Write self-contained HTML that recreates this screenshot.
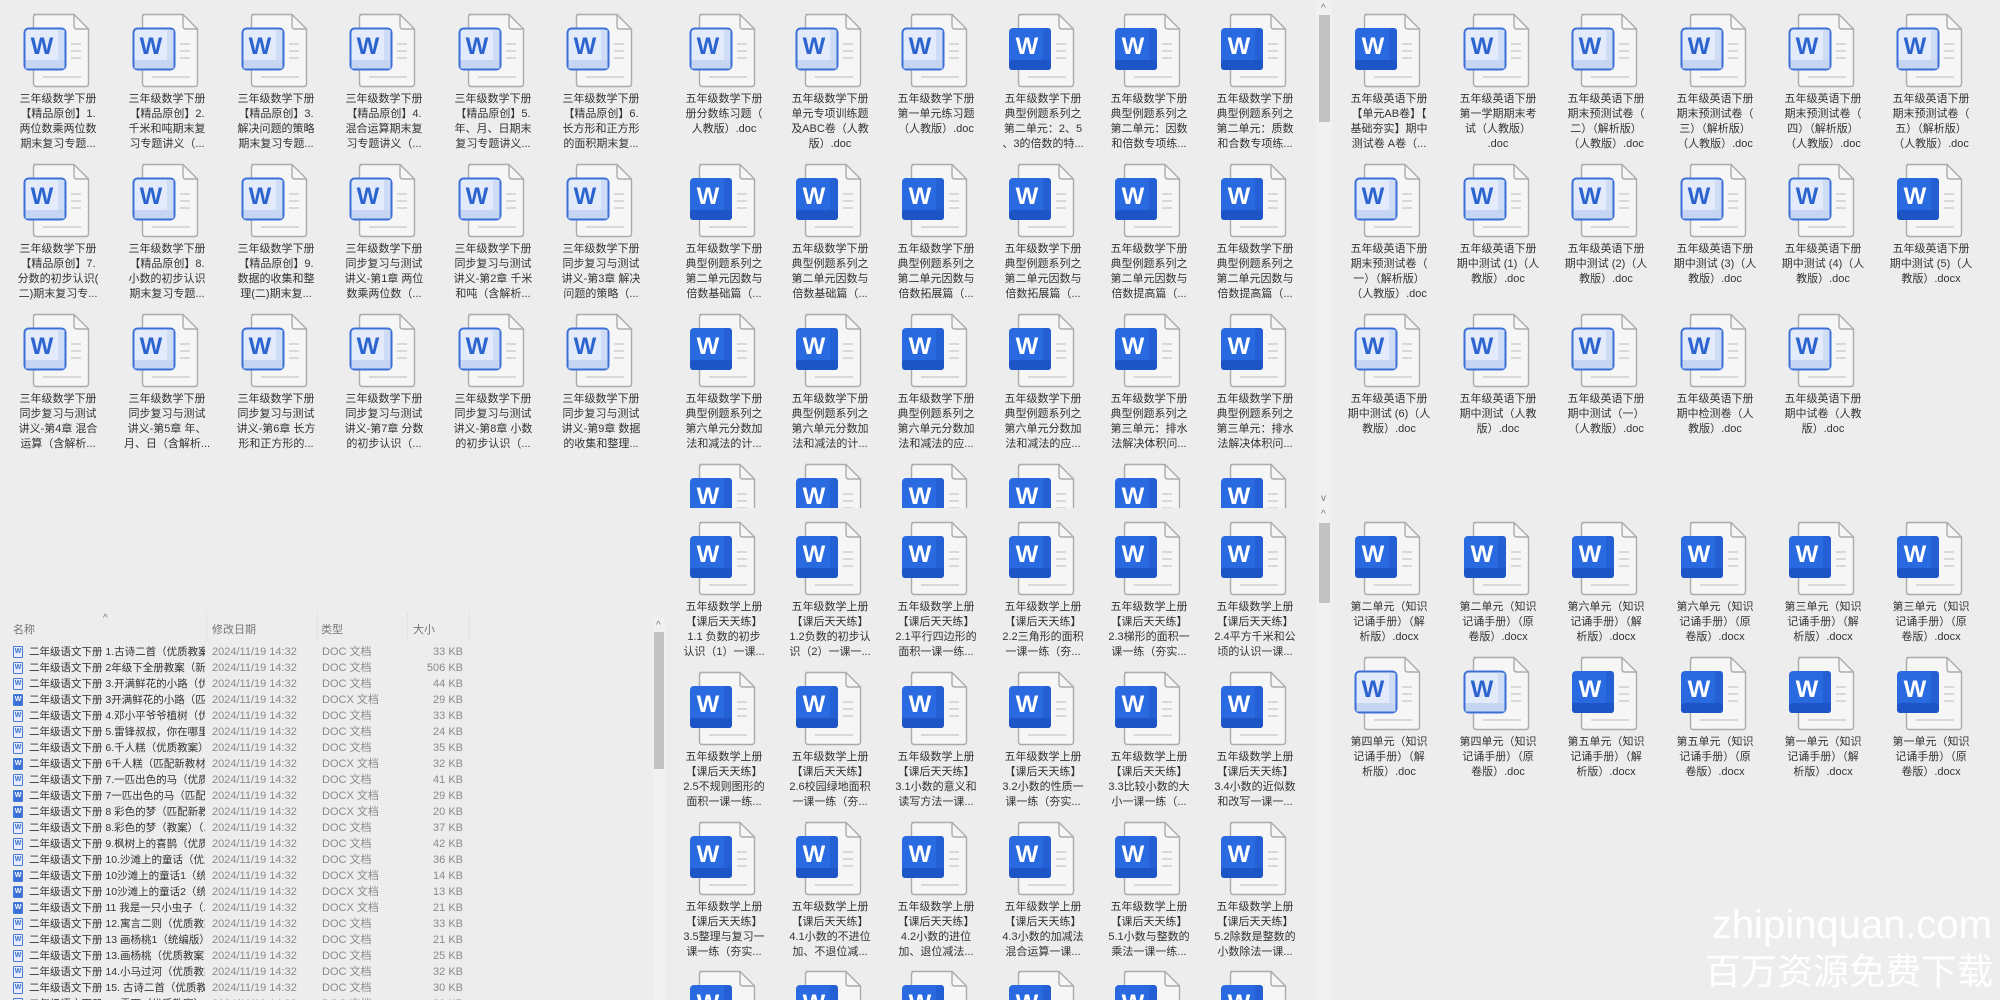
<!DOCTYPE html>
<html><head><meta charset="utf-8">
<style>
*{margin:0;padding:0;box-sizing:border-box}
html,body{width:2000px;height:1000px;overflow:hidden;background:#ededed}
body{position:relative;font-family:"Liberation Sans","Noto Sans CJK SC",sans-serif}
.p{position:absolute;overflow:hidden}
.it{position:absolute;width:108px;height:140px}
.it svg{position:absolute;left:19px;top:0;width:70px;height:75px}
.t{position:absolute;top:79px;left:-8px;width:124px;text-align:center;font-size:11px;line-height:15px;color:#333;white-space:nowrap}
.sb{position:absolute;background:#f1f1f1}
.th{position:absolute;background:#c2c2c2}
.ar{position:absolute;font-size:10px;color:#777;line-height:10px}
.hd{position:absolute;top:21px;font-size:11px;color:#777}
.sep{position:absolute;top:12px;width:1px;height:30px;background:#e2e2e2}
.row{position:absolute;left:0;width:650px;height:16px;font-size:11px;line-height:16px;white-space:nowrap}
.row i{position:absolute;left:13px;top:2px;width:10px;height:12px;border:1px solid #4a7bd6;background:#e6eefb;border-radius:1px;font-style:normal;font-size:7px;line-height:10px;text-align:center;color:#3a70d8;font-weight:bold}
.row i.x{background:#3a70d8;color:#fff}
.row .n{position:absolute;left:29px;width:176px;overflow:hidden;color:#333;font-size:10.5px}
.row .d{position:absolute;left:212px;color:#8a8a8a}
.row .y{position:absolute;left:322px;color:#8a8a8a}
.row .s{position:absolute;right:187px;color:#8a8a8a}
.wm{position:absolute;color:#fff;white-space:nowrap}
</style></head><body>
<svg width="0" height="0" style="position:absolute">
<defs>
<symbol id="pg" viewBox="0 0 70 75">
<path d="M10.5 1.5H51L65.5 16V70.5Q65.5 73.5 62.5 73.5H13.5Q10.5 73.5 10.5 70.5V4.5Q10.5 1.5 13.5 1.5Z" fill="#f6f6f6" stroke="#ababab" stroke-width="1.4"/>
<path d="M51 1.5V13Q51 16 54 16H65.5" fill="none" stroke="#ababab" stroke-width="1.4"/>
<path d="M48 31H58M48 38H58M48 45H58M20 64H58" stroke="#d8d8d8" stroke-width="2"/>
</symbol>
<symbol id="L" viewBox="0 0 70 75">
<use href="#pg"/>
<rect x="1.5" y="15.5" width="41" height="41" rx="4" fill="#e3ebfa" stroke="#3a70d8" stroke-width="2"/>
<rect x="35" y="17" width="6.5" height="38" fill="#cfdcf5"/>
<rect x="2.5" y="47" width="39" height="8.5" fill="#c6d5f2"/>
<text x="19" y="41" font-family="Liberation Sans" font-weight="bold" font-size="24" fill="#2c64cf" text-anchor="middle">W</text>
</symbol>
<symbol id="S" viewBox="0 0 70 75">
<use href="#pg"/>
<rect x="1" y="15" width="42" height="42" rx="4" fill="#2a6ae0"/>
<rect x="35" y="15" width="8" height="42" rx="3" fill="#2460d3"/>
<rect x="1" y="47" width="42" height="10" rx="3" fill="#1d55c6"/>
<text x="19" y="41" font-family="Liberation Sans" font-weight="bold" font-size="24" fill="#fff" text-anchor="middle">W</text>
</symbol>
</defs></svg>

<!-- LEFT TOP -->
<div class="p" style="left:0;top:0;width:655px;height:600px">
<div class="it" style="left:4px;top:13px"><svg><use href="#L"/></svg><div class="t">三年级数学下册<br>【精品原创】1.<br>两位数乘两位数<br>期末复习专题...</div></div>
<div class="it" style="left:113px;top:13px"><svg><use href="#L"/></svg><div class="t">三年级数学下册<br>【精品原创】2.<br>千米和吨期末复<br>习专题讲义（...</div></div>
<div class="it" style="left:222px;top:13px"><svg><use href="#L"/></svg><div class="t">三年级数学下册<br>【精品原创】3.<br>解决问题的策略<br>期末复习专题...</div></div>
<div class="it" style="left:330px;top:13px"><svg><use href="#L"/></svg><div class="t">三年级数学下册<br>【精品原创】4.<br>混合运算期末复<br>习专题讲义（...</div></div>
<div class="it" style="left:439px;top:13px"><svg><use href="#L"/></svg><div class="t">三年级数学下册<br>【精品原创】5.<br>年、月、日期末<br>复习专题讲义...</div></div>
<div class="it" style="left:547px;top:13px"><svg><use href="#L"/></svg><div class="t">三年级数学下册<br>【精品原创】6.<br>长方形和正方形<br>的面积期末复...</div></div>

<div class="it" style="left:4px;top:163px"><svg><use href="#L"/></svg><div class="t">三年级数学下册<br>【精品原创】7.<br>分数的初步认识(<br>二)期末复习专...</div></div>
<div class="it" style="left:113px;top:163px"><svg><use href="#L"/></svg><div class="t">三年级数学下册<br>【精品原创】8.<br>小数的初步认识<br>期末复习专题...</div></div>
<div class="it" style="left:222px;top:163px"><svg><use href="#L"/></svg><div class="t">三年级数学下册<br>【精品原创】9.<br>数据的收集和整<br>理(二)期末复...</div></div>
<div class="it" style="left:330px;top:163px"><svg><use href="#L"/></svg><div class="t">三年级数学下册<br>同步复习与测试<br>讲义-第1章 两位<br>数乘两位数（...</div></div>
<div class="it" style="left:439px;top:163px"><svg><use href="#L"/></svg><div class="t">三年级数学下册<br>同步复习与测试<br>讲义-第2章 千米<br>和吨（含解析...</div></div>
<div class="it" style="left:547px;top:163px"><svg><use href="#L"/></svg><div class="t">三年级数学下册<br>同步复习与测试<br>讲义-第3章 解决<br>问题的策略（...</div></div>

<div class="it" style="left:4px;top:313px"><svg><use href="#L"/></svg><div class="t">三年级数学下册<br>同步复习与测试<br>讲义-第4章 混合<br>运算（含解析...</div></div>
<div class="it" style="left:113px;top:313px"><svg><use href="#L"/></svg><div class="t">三年级数学下册<br>同步复习与测试<br>讲义-第5章 年、<br>月、日（含解析...</div></div>
<div class="it" style="left:222px;top:313px"><svg><use href="#L"/></svg><div class="t">三年级数学下册<br>同步复习与测试<br>讲义-第6章 长方<br>形和正方形的...</div></div>
<div class="it" style="left:330px;top:313px"><svg><use href="#L"/></svg><div class="t">三年级数学下册<br>同步复习与测试<br>讲义-第7章 分数<br>的初步认识（...</div></div>
<div class="it" style="left:439px;top:313px"><svg><use href="#L"/></svg><div class="t">三年级数学下册<br>同步复习与测试<br>讲义-第8章 小数<br>的初步认识（...</div></div>
<div class="it" style="left:547px;top:313px"><svg><use href="#L"/></svg><div class="t">三年级数学下册<br>同步复习与测试<br>讲义-第9章 数据<br>的收集和整理...</div></div>
</div>

<!-- LIST -->
<div class="p" style="left:0;top:600px;width:650px;height:400px">
<div class="ar" style="left:103px;top:14px">^</div>
<div class="hd" style="left:13px">名称</div>
<div class="hd" style="left:212px">修改日期</div>
<div class="hd" style="left:321px">类型</div>
<div class="hd" style="left:413px">大小</div>
<div class="sep" style="left:206px"></div><div class="sep" style="left:317px"></div><div class="sep" style="left:407px"></div><div class="sep" style="left:469px"></div>
<div class="row" style="top:44px"><i>W</i><span class="n">二年级语文下册 1.古诗二首（优质教案...</span><span class="d">2024/11/19 14:32</span><span class="y">DOC 文档</span><span class="s">33 KB</span></div>
<div class="row" style="top:60px"><i>W</i><span class="n">二年级语文下册 2年级下全册教案（新...</span><span class="d">2024/11/19 14:32</span><span class="y">DOC 文档</span><span class="s">506 KB</span></div>
<div class="row" style="top:76px"><i>W</i><span class="n">二年级语文下册 3.开满鲜花的小路（优...</span><span class="d">2024/11/19 14:32</span><span class="y">DOC 文档</span><span class="s">44 KB</span></div>
<div class="row" style="top:92px"><i class="x">W</i><span class="n">二年级语文下册 3开满鲜花的小路（匹...</span><span class="d">2024/11/19 14:32</span><span class="y">DOCX 文档</span><span class="s">29 KB</span></div>
<div class="row" style="top:108px"><i>W</i><span class="n">二年级语文下册 4.邓小平爷爷植树（优...</span><span class="d">2024/11/19 14:32</span><span class="y">DOC 文档</span><span class="s">33 KB</span></div>
<div class="row" style="top:124px"><i>W</i><span class="n">二年级语文下册 5.雷锋叔叔，你在哪里...</span><span class="d">2024/11/19 14:32</span><span class="y">DOC 文档</span><span class="s">24 KB</span></div>
<div class="row" style="top:140px"><i>W</i><span class="n">二年级语文下册 6.千人糕（优质教案）...</span><span class="d">2024/11/19 14:32</span><span class="y">DOC 文档</span><span class="s">35 KB</span></div>
<div class="row" style="top:156px"><i class="x">W</i><span class="n">二年级语文下册 6千人糕（匹配新教材...</span><span class="d">2024/11/19 14:32</span><span class="y">DOCX 文档</span><span class="s">32 KB</span></div>
<div class="row" style="top:172px"><i>W</i><span class="n">二年级语文下册 7.一匹出色的马（优质...</span><span class="d">2024/11/19 14:32</span><span class="y">DOC 文档</span><span class="s">41 KB</span></div>
<div class="row" style="top:188px"><i class="x">W</i><span class="n">二年级语文下册 7一匹出色的马（匹配...</span><span class="d">2024/11/19 14:32</span><span class="y">DOCX 文档</span><span class="s">29 KB</span></div>
<div class="row" style="top:204px"><i class="x">W</i><span class="n">二年级语文下册 8 彩色的梦（匹配新教...</span><span class="d">2024/11/19 14:32</span><span class="y">DOCX 文档</span><span class="s">20 KB</span></div>
<div class="row" style="top:220px"><i>W</i><span class="n">二年级语文下册 8.彩色的梦（教案）（...</span><span class="d">2024/11/19 14:32</span><span class="y">DOC 文档</span><span class="s">37 KB</span></div>
<div class="row" style="top:236px"><i>W</i><span class="n">二年级语文下册 9.枫树上的喜鹊（优质...</span><span class="d">2024/11/19 14:32</span><span class="y">DOC 文档</span><span class="s">42 KB</span></div>
<div class="row" style="top:252px"><i>W</i><span class="n">二年级语文下册 10.沙滩上的童话（优质...</span><span class="d">2024/11/19 14:32</span><span class="y">DOC 文档</span><span class="s">36 KB</span></div>
<div class="row" style="top:268px"><i class="x">W</i><span class="n">二年级语文下册 10沙滩上的童话1（统...</span><span class="d">2024/11/19 14:32</span><span class="y">DOCX 文档</span><span class="s">14 KB</span></div>
<div class="row" style="top:284px"><i class="x">W</i><span class="n">二年级语文下册 10沙滩上的童话2（统...</span><span class="d">2024/11/19 14:32</span><span class="y">DOCX 文档</span><span class="s">13 KB</span></div>
<div class="row" style="top:300px"><i class="x">W</i><span class="n">二年级语文下册 11 我是一只小虫子（...</span><span class="d">2024/11/19 14:32</span><span class="y">DOCX 文档</span><span class="s">21 KB</span></div>
<div class="row" style="top:316px"><i>W</i><span class="n">二年级语文下册 12.寓言二则（优质教案...</span><span class="d">2024/11/19 14:32</span><span class="y">DOC 文档</span><span class="s">33 KB</span></div>
<div class="row" style="top:332px"><i>W</i><span class="n">二年级语文下册 13 画杨桃1（统编版）...</span><span class="d">2024/11/19 14:32</span><span class="y">DOC 文档</span><span class="s">21 KB</span></div>
<div class="row" style="top:348px"><i>W</i><span class="n">二年级语文下册 13.画杨桃（优质教案）...</span><span class="d">2024/11/19 14:32</span><span class="y">DOC 文档</span><span class="s">25 KB</span></div>
<div class="row" style="top:364px"><i>W</i><span class="n">二年级语文下册 14.小马过河（优质教案...</span><span class="d">2024/11/19 14:32</span><span class="y">DOC 文档</span><span class="s">32 KB</span></div>
<div class="row" style="top:380px"><i>W</i><span class="n">二年级语文下册 15. 古诗二首（优质教...</span><span class="d">2024/11/19 14:32</span><span class="y">DOC 文档</span><span class="s">30 KB</span></div>
<div class="row" style="top:396px"><i>W</i><span class="n">二年级语文下册 16.雷雨（优质教案）...</span><span class="d">2024/11/19 14:32</span><span class="y">DOC 文档</span><span class="s">30 KB</span></div>
</div>

<!-- left list scrollbar -->
<div class="sb" style="left:653px;top:618px;width:12px;height:382px"></div>
<div class="th" style="left:654px;top:632px;width:10px;height:137px"></div>
<div class="ar" style="left:656px;top:621px">^</div>

<!-- MIDDLE TOP -->
<div class="p" style="left:660px;top:0;width:655px;height:508px">
<div class="it" style="left:10px;top:13px"><svg><use href="#L"/></svg><div class="t">五年级数学下册<br>册分数练习题（<br>人教版）.doc</div></div>
<div class="it" style="left:116px;top:13px"><svg><use href="#L"/></svg><div class="t">五年级数学下册<br>单元专项训练题<br>及ABC卷（人教<br>版）.doc</div></div>
<div class="it" style="left:222px;top:13px"><svg><use href="#L"/></svg><div class="t">五年级数学下册<br>第一单元练习题<br>（人教版）.doc</div></div>
<div class="it" style="left:329px;top:13px"><svg><use href="#S"/></svg><div class="t">五年级数学下册<br>典型例题系列之<br>第二单元：2、5<br>、3的倍数的特...</div></div>
<div class="it" style="left:435px;top:13px"><svg><use href="#S"/></svg><div class="t">五年级数学下册<br>典型例题系列之<br>第二单元：因数<br>和倍数专项练...</div></div>
<div class="it" style="left:541px;top:13px"><svg><use href="#S"/></svg><div class="t">五年级数学下册<br>典型例题系列之<br>第二单元：质数<br>和合数专项练...</div></div>

<div class="it" style="left:10px;top:163px"><svg><use href="#S"/></svg><div class="t">五年级数学下册<br>典型例题系列之<br>第二单元因数与<br>倍数基础篇（...</div></div>
<div class="it" style="left:116px;top:163px"><svg><use href="#S"/></svg><div class="t">五年级数学下册<br>典型例题系列之<br>第二单元因数与<br>倍数基础篇（...</div></div>
<div class="it" style="left:222px;top:163px"><svg><use href="#S"/></svg><div class="t">五年级数学下册<br>典型例题系列之<br>第二单元因数与<br>倍数拓展篇（...</div></div>
<div class="it" style="left:329px;top:163px"><svg><use href="#S"/></svg><div class="t">五年级数学下册<br>典型例题系列之<br>第二单元因数与<br>倍数拓展篇（...</div></div>
<div class="it" style="left:435px;top:163px"><svg><use href="#S"/></svg><div class="t">五年级数学下册<br>典型例题系列之<br>第二单元因数与<br>倍数提高篇（...</div></div>
<div class="it" style="left:541px;top:163px"><svg><use href="#S"/></svg><div class="t">五年级数学下册<br>典型例题系列之<br>第二单元因数与<br>倍数提高篇（...</div></div>

<div class="it" style="left:10px;top:313px"><svg><use href="#S"/></svg><div class="t">五年级数学下册<br>典型例题系列之<br>第六单元分数加<br>法和减法的计...</div></div>
<div class="it" style="left:116px;top:313px"><svg><use href="#S"/></svg><div class="t">五年级数学下册<br>典型例题系列之<br>第六单元分数加<br>法和减法的计...</div></div>
<div class="it" style="left:222px;top:313px"><svg><use href="#S"/></svg><div class="t">五年级数学下册<br>典型例题系列之<br>第六单元分数加<br>法和减法的应...</div></div>
<div class="it" style="left:329px;top:313px"><svg><use href="#S"/></svg><div class="t">五年级数学下册<br>典型例题系列之<br>第六单元分数加<br>法和减法的应...</div></div>
<div class="it" style="left:435px;top:313px"><svg><use href="#S"/></svg><div class="t">五年级数学下册<br>典型例题系列之<br>第三单元：排水<br>法解决体积问...</div></div>
<div class="it" style="left:541px;top:313px"><svg><use href="#S"/></svg><div class="t">五年级数学下册<br>典型例题系列之<br>第三单元：排水<br>法解决体积问...</div></div>

<div class="it" style="left:10px;top:463px"><svg><use href="#S"/></svg></div>
<div class="it" style="left:116px;top:463px"><svg><use href="#S"/></svg></div>
<div class="it" style="left:222px;top:463px"><svg><use href="#S"/></svg></div>
<div class="it" style="left:329px;top:463px"><svg><use href="#S"/></svg></div>
<div class="it" style="left:435px;top:463px"><svg><use href="#S"/></svg></div>
<div class="it" style="left:541px;top:463px"><svg><use href="#S"/></svg></div>
</div>

<!-- MIDDLE BOTTOM -->
<div class="p" style="left:660px;top:508px;width:655px;height:492px">
<div class="it" style="left:10px;top:13px"><svg><use href="#S"/></svg><div class="t">五年级数学上册<br>【课后天天练】<br>1.1 负数的初步<br>认识（1）一课...</div></div>
<div class="it" style="left:116px;top:13px"><svg><use href="#S"/></svg><div class="t">五年级数学上册<br>【课后天天练】<br>1.2负数的初步认<br>识（2）一课一...</div></div>
<div class="it" style="left:222px;top:13px"><svg><use href="#S"/></svg><div class="t">五年级数学上册<br>【课后天天练】<br>2.1平行四边形的<br>面积一课一练...</div></div>
<div class="it" style="left:329px;top:13px"><svg><use href="#S"/></svg><div class="t">五年级数学上册<br>【课后天天练】<br>2.2三角形的面积<br>一课一练（夯...</div></div>
<div class="it" style="left:435px;top:13px"><svg><use href="#S"/></svg><div class="t">五年级数学上册<br>【课后天天练】<br>2.3梯形的面积一<br>课一练（夯实...</div></div>
<div class="it" style="left:541px;top:13px"><svg><use href="#S"/></svg><div class="t">五年级数学上册<br>【课后天天练】<br>2.4平方千米和公<br>顷的认识一课...</div></div>

<div class="it" style="left:10px;top:163px"><svg><use href="#S"/></svg><div class="t">五年级数学上册<br>【课后天天练】<br>2.5不规则图形的<br>面积一课一练...</div></div>
<div class="it" style="left:116px;top:163px"><svg><use href="#S"/></svg><div class="t">五年级数学上册<br>【课后天天练】<br>2.6校园绿地面积<br>一课一练（夯...</div></div>
<div class="it" style="left:222px;top:163px"><svg><use href="#S"/></svg><div class="t">五年级数学上册<br>【课后天天练】<br>3.1小数的意义和<br>读写方法一课...</div></div>
<div class="it" style="left:329px;top:163px"><svg><use href="#S"/></svg><div class="t">五年级数学上册<br>【课后天天练】<br>3.2小数的性质一<br>课一练（夯实...</div></div>
<div class="it" style="left:435px;top:163px"><svg><use href="#S"/></svg><div class="t">五年级数学上册<br>【课后天天练】<br>3.3比较小数的大<br>小一课一练（...</div></div>
<div class="it" style="left:541px;top:163px"><svg><use href="#S"/></svg><div class="t">五年级数学上册<br>【课后天天练】<br>3.4小数的近似数<br>和改写一课一...</div></div>

<div class="it" style="left:10px;top:313px"><svg><use href="#S"/></svg><div class="t">五年级数学上册<br>【课后天天练】<br>3.5整理与复习一<br>课一练（夯实...</div></div>
<div class="it" style="left:116px;top:313px"><svg><use href="#S"/></svg><div class="t">五年级数学上册<br>【课后天天练】<br>4.1小数的不进位<br>加、不退位减...</div></div>
<div class="it" style="left:222px;top:313px"><svg><use href="#S"/></svg><div class="t">五年级数学上册<br>【课后天天练】<br>4.2小数的进位<br>加、退位减法...</div></div>
<div class="it" style="left:329px;top:313px"><svg><use href="#S"/></svg><div class="t">五年级数学上册<br>【课后天天练】<br>4.3小数的加减法<br>混合运算一课...</div></div>
<div class="it" style="left:435px;top:313px"><svg><use href="#S"/></svg><div class="t">五年级数学上册<br>【课后天天练】<br>5.1小数与整数的<br>乘法一课一练...</div></div>
<div class="it" style="left:541px;top:313px"><svg><use href="#S"/></svg><div class="t">五年级数学上册<br>【课后天天练】<br>5.2除数是整数的<br>小数除法一课...</div></div>

<div class="it" style="left:10px;top:462px"><svg><use href="#S"/></svg></div>
<div class="it" style="left:116px;top:462px"><svg><use href="#S"/></svg></div>
<div class="it" style="left:222px;top:462px"><svg><use href="#S"/></svg></div>
<div class="it" style="left:329px;top:462px"><svg><use href="#S"/></svg></div>
<div class="it" style="left:435px;top:462px"><svg><use href="#S"/></svg></div>
<div class="it" style="left:541px;top:462px"><svg><use href="#S"/></svg></div>
</div>

<!-- central scrollbars -->
<div class="sb" style="left:1316px;top:0;width:16px;height:508px"></div>
<div class="th" style="left:1319px;top:15px;width:11px;height:107px"></div>
<div class="ar" style="left:1321px;top:4px">^</div>
<div class="ar" style="left:1321px;top:494px">v</div>
<div class="sb" style="left:1316px;top:508px;width:16px;height:492px"></div>
<div class="th" style="left:1319px;top:523px;width:11px;height:80px"></div>
<div class="ar" style="left:1321px;top:510px">^</div>

<!-- RIGHT TOP -->
<div class="p" style="left:1331px;top:0;width:669px;height:508px">
<div class="it" style="left:4px;top:13px"><svg><use href="#S"/></svg><div class="t">五年级英语下册<br>【单元AB卷】【<br>基础夯实】期中<br>测试卷 A卷（...</div></div>
<div class="it" style="left:113px;top:13px"><svg><use href="#L"/></svg><div class="t">五年级英语下册<br>第一学期期末考<br>试（人教版）<br>.doc</div></div>
<div class="it" style="left:221px;top:13px"><svg><use href="#L"/></svg><div class="t">五年级英语下册<br>期末预测试卷（<br>二）（解析版）<br>（人教版）.doc</div></div>
<div class="it" style="left:330px;top:13px"><svg><use href="#L"/></svg><div class="t">五年级英语下册<br>期末预测试卷（<br>三）（解析版）<br>（人教版）.doc</div></div>
<div class="it" style="left:438px;top:13px"><svg><use href="#L"/></svg><div class="t">五年级英语下册<br>期末预测试卷（<br>四）（解析版）<br>（人教版）.doc</div></div>
<div class="it" style="left:546px;top:13px"><svg><use href="#L"/></svg><div class="t">五年级英语下册<br>期末预测试卷（<br>五）（解析版）<br>（人教版）.doc</div></div>

<div class="it" style="left:4px;top:163px"><svg><use href="#L"/></svg><div class="t">五年级英语下册<br>期末预测试卷（<br>一）（解析版）<br>（人教版）.doc</div></div>
<div class="it" style="left:113px;top:163px"><svg><use href="#L"/></svg><div class="t">五年级英语下册<br>期中测试 (1)（人<br>教版）.doc</div></div>
<div class="it" style="left:221px;top:163px"><svg><use href="#L"/></svg><div class="t">五年级英语下册<br>期中测试 (2)（人<br>教版）.doc</div></div>
<div class="it" style="left:330px;top:163px"><svg><use href="#L"/></svg><div class="t">五年级英语下册<br>期中测试 (3)（人<br>教版）.doc</div></div>
<div class="it" style="left:438px;top:163px"><svg><use href="#L"/></svg><div class="t">五年级英语下册<br>期中测试 (4)（人<br>教版）.doc</div></div>
<div class="it" style="left:546px;top:163px"><svg><use href="#S"/></svg><div class="t">五年级英语下册<br>期中测试 (5)（人<br>教版）.docx</div></div>

<div class="it" style="left:4px;top:313px"><svg><use href="#L"/></svg><div class="t">五年级英语下册<br>期中测试 (6)（人<br>教版）.doc</div></div>
<div class="it" style="left:113px;top:313px"><svg><use href="#L"/></svg><div class="t">五年级英语下册<br>期中测试（人教<br>版）.doc</div></div>
<div class="it" style="left:221px;top:313px"><svg><use href="#L"/></svg><div class="t">五年级英语下册<br>期中测试（一）<br>（人教版）.doc</div></div>
<div class="it" style="left:330px;top:313px"><svg><use href="#L"/></svg><div class="t">五年级英语下册<br>期中检测卷（人<br>教版）.doc</div></div>
<div class="it" style="left:438px;top:313px"><svg><use href="#L"/></svg><div class="t">五年级英语下册<br>期中试卷（人教<br>版）.doc</div></div>
</div>

<!-- RIGHT BOTTOM -->
<div class="p" style="left:1331px;top:508px;width:669px;height:492px">
<div class="it" style="left:4px;top:13px"><svg><use href="#S"/></svg><div class="t">第二单元（知识<br>记诵手册）（解<br>析版）.docx</div></div>
<div class="it" style="left:113px;top:13px"><svg><use href="#S"/></svg><div class="t">第二单元（知识<br>记诵手册）（原<br>卷版）.docx</div></div>
<div class="it" style="left:221px;top:13px"><svg><use href="#S"/></svg><div class="t">第六单元（知识<br>记诵手册）（解<br>析版）.docx</div></div>
<div class="it" style="left:330px;top:13px"><svg><use href="#S"/></svg><div class="t">第六单元（知识<br>记诵手册）（原<br>卷版）.docx</div></div>
<div class="it" style="left:438px;top:13px"><svg><use href="#S"/></svg><div class="t">第三单元（知识<br>记诵手册）（解<br>析版）.docx</div></div>
<div class="it" style="left:546px;top:13px"><svg><use href="#S"/></svg><div class="t">第三单元（知识<br>记诵手册）（原<br>卷版）.docx</div></div>

<div class="it" style="left:4px;top:148px"><svg><use href="#L"/></svg><div class="t">第四单元（知识<br>记诵手册）（解<br>析版）.doc</div></div>
<div class="it" style="left:113px;top:148px"><svg><use href="#L"/></svg><div class="t">第四单元（知识<br>记诵手册）（原<br>卷版）.doc</div></div>
<div class="it" style="left:221px;top:148px"><svg><use href="#S"/></svg><div class="t">第五单元（知识<br>记诵手册）（解<br>析版）.docx</div></div>
<div class="it" style="left:330px;top:148px"><svg><use href="#S"/></svg><div class="t">第五单元（知识<br>记诵手册）（原<br>卷版）.docx</div></div>
<div class="it" style="left:438px;top:148px"><svg><use href="#S"/></svg><div class="t">第一单元（知识<br>记诵手册）（解<br>析版）.docx</div></div>
<div class="it" style="left:546px;top:148px"><svg><use href="#S"/></svg><div class="t">第一单元（知识<br>记诵手册）（原<br>卷版）.docx</div></div>
</div>

<!-- watermark -->
<div class="wm" style="right:8px;top:903px;font-size:40px;line-height:44px;font-family:'Liberation Sans',sans-serif">zhipinquan.com</div>
<div class="wm" style="right:7px;top:950px;font-size:36px;line-height:44px;font-family:'Liberation Sans','Noto Sans CJK SC',sans-serif">百万资源免费下载</div>
</body></html>
